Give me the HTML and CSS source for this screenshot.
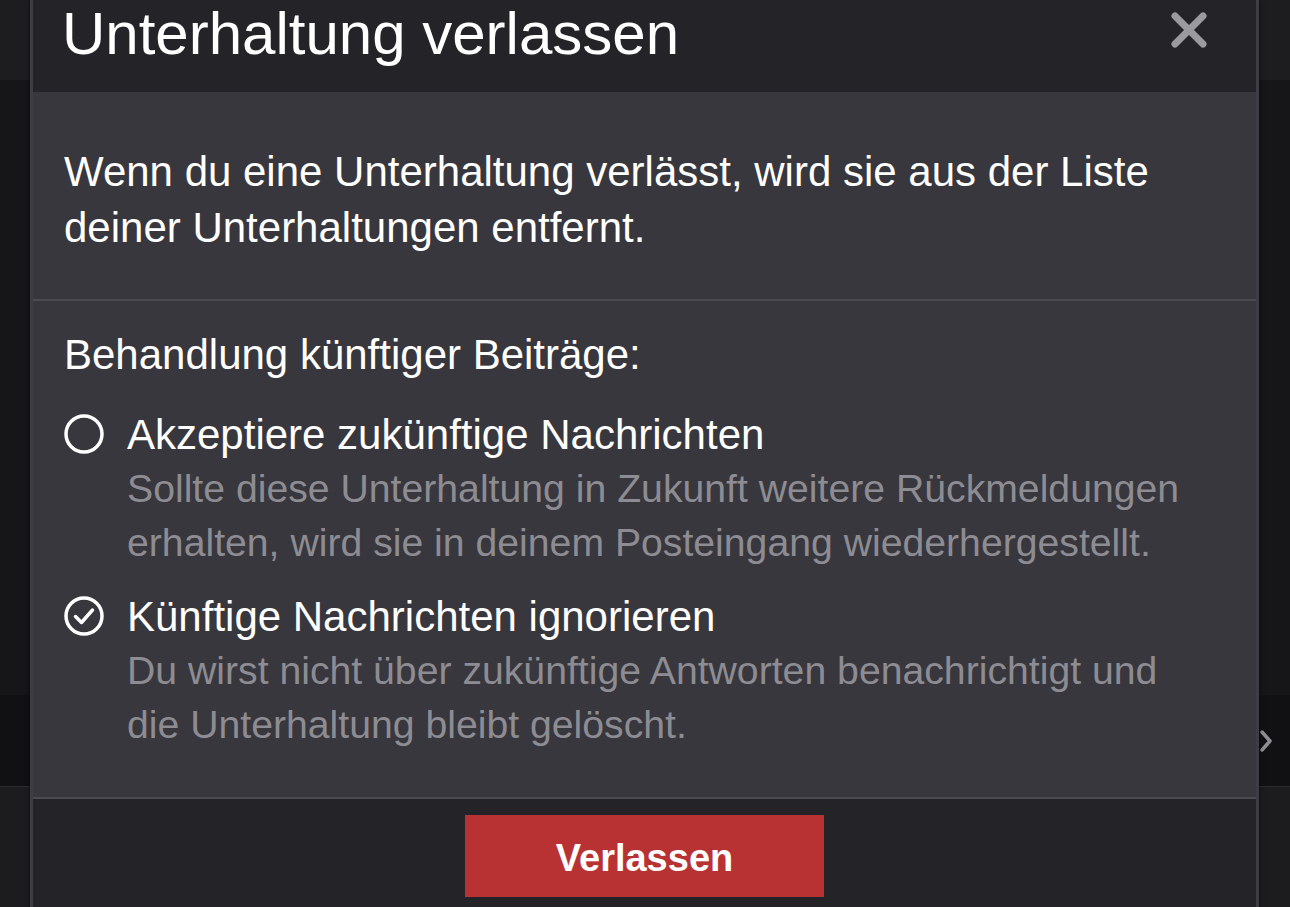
FILE: index.html
```html
<!DOCTYPE html>
<html>
<head>
	<title>Unterhaltung verlassen</title>
	<meta charset="utf-8" />
    <link rel="stylesheet" href="styles.css">
</head>
<body>
    <div class="page">
        <div class="topbar"></div>
        <div class="content"></div>
        <div class="row">
            <svg class="chevron" width="14" height="24" viewBox="0 0 14 24">
                <polyline points="3,3 11,12 3,21" fill="none" stroke="#8e8e93" stroke-width="3.5" stroke-linecap="round" stroke-linejoin="round" />
            </svg>
        </div>
        <div class="bottom"></div>
    </div>

    <div class="modal">
        <div class="modal-header">
            <h1 class="modal-title">Unterhaltung verlassen</h1>
            <svg class="close" width="38" height="38" viewBox="0 0 38 38">
                <line x1="5" y1="5" x2="33" y2="33" stroke="#9b9a9f" stroke-width="7" stroke-linecap="round" />
                <line x1="33" y1="5" x2="5" y2="33" stroke="#9b9a9f" stroke-width="7" stroke-linecap="round" />
            </svg>
        </div>

        <div class="modal-section intro">
            <p>Wenn du eine Unterhaltung verlässt, wird sie aus der Liste deiner Unterhaltungen entfernt.</p>
        </div>

        <div class="modal-section choices">
            <div class="choices-title">Behandlung künftiger Beiträge:</div>

            <div class="option">
                <svg class="radio" width="40" height="40" viewBox="0 0 40 40">
                    <circle cx="20" cy="20" r="18" fill="none" stroke="#fff" stroke-width="3.5" />
                </svg>
                <div class="option-text">
                    <div class="option-label">Akzeptiere zukünftige Nachrichten</div>
                    <div class="option-desc">Sollte diese Unterhaltung in Zukunft weitere Rückmeldungen erhalten, wird sie in deinem Posteingang wiederhergestellt.</div>
                </div>
            </div>

            <div class="option">
                <svg class="radio" width="40" height="40" viewBox="0 0 40 40">
                    <circle cx="20" cy="20" r="18" fill="none" stroke="#fff" stroke-width="3.5" />
                    <polyline points="11.5,20.5 17.5,26.5 28.5,14" fill="none" stroke="#fff" stroke-width="3.5" stroke-linecap="round" stroke-linejoin="round" />
                </svg>
                <div class="option-text">
                    <div class="option-label">Künftige Nachrichten ignorieren</div>
                    <div class="option-desc">Du wirst nicht über zukünftige Antworten benachrichtigt und die Unterhaltung bleibt gelöscht.</div>
                </div>
            </div>
        </div>

        <div class="modal-footer">
            <button class="btn-leave">Verlassen</button>
        </div>
    </div>
</body>
</html>
```

FILE: styles.css
```css
html, body {
    margin: 0;
    height: 100%;
    overflow: hidden;
}
body {
    background: #161618;
    font-family: "Liberation Sans", Arial, sans-serif;
    color: #fff;
}

.page {
    height: 100vh;
    display: flex;
    flex-direction: column;
}
.topbar {
    height: 80px;
    background: #1d1d20;
}
.content {
    height: 615px;
    background: #161618;
}
.row {
    height: 91px;
    background: #111113;
    border-bottom: 1px solid #2a2a2c;
    display: flex;
    justify-content: flex-end;
    align-items: center;
    padding-right: 17px;
}
.bottom {
    flex: 1;
    background: #1c1c1f;
}

.modal {
    position: absolute;
    top: 0;
    left: 30px;
    width: 1229px;
    box-sizing: border-box;
    border-left: 3px solid #3e3d43;
    border-right: 3px solid #3e3d43;
    background: #38373d;
    box-shadow: 0 0 4px rgba(0, 0, 0, 0.6);
}

.modal-header {
    height: 92px;
    box-sizing: border-box;
    background: #242328;
    display: flex;
    justify-content: space-between;
    align-items: flex-start;
    padding: 4px 48px 0 29px;
}
.modal-title {
    margin: 0;
    font-size: 60px;
    line-height: 60px;
    font-weight: normal;
}
.close {
    margin-top: 7px;
}

.modal-section {
    padding: 0 31px;
}
.intro {
    padding-top: 52px;
    padding-bottom: 43px;
    border-bottom: 2px solid #4b4a50;
}
.intro p {
    margin: 0;
    font-size: 42px;
    line-height: 56px;
}

.choices {
    padding-top: 26px;
    padding-bottom: 45px;
    border-bottom: 2px solid #4b4a50;
}
.choices-title {
    font-size: 42px;
    line-height: 56px;
    margin-bottom: 25px;
}
.option {
    display: flex;
    gap: 23px;
    margin-bottom: 20px;
}
.option:last-child {
    margin-bottom: 0;
}
.radio {
    flex-shrink: 0;
    margin-top: 6px;
}
.option-text {
    padding-right: 40px;
}
.option-label {
    font-size: 42px;
    line-height: 54px;
}
.option-desc {
    font-size: 39.2px;
    line-height: 54px;
    color: #8d8c92;
}

.modal-footer {
    background: #242328;
    padding: 16px 0;
    display: flex;
    justify-content: center;
}
.btn-leave {
    width: 359px;
    height: 82px;
    border: none;
    background: #b93233;
    color: #fff;
    font-family: "Liberation Sans", Arial, sans-serif;
    font-size: 38px;
    font-weight: bold;
    padding: 4px 0 0 0;
}
```
